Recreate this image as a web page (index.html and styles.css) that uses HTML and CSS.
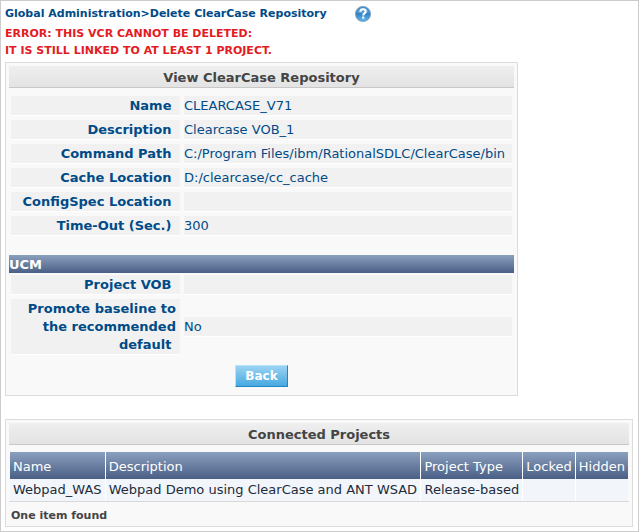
FILE: index.html
```html
<!DOCTYPE html>
<html lang="en">
<head>
<meta charset="utf-8">
<title>Delete ClearCase Repository</title>
<link rel="stylesheet" href="styles.css">
</head>
<body>
<main class="page">
  <header class="crumbs">
    <h1 class="crumbs-title">Global Administration&gt;Delete ClearCase Repository</h1>
    <a class="help" href="#help" aria-label="Help">
      <svg width="18" height="18" viewBox="0 0 18 18" aria-hidden="true">
        <defs>
          <linearGradient id="ball" x1="0" y1="0" x2="0" y2="1">
            <stop offset="0" stop-color="#3f86c4"/>
            <stop offset="0.5" stop-color="#2f82c6"/>
            <stop offset="1" stop-color="#63bdf0"/>
          </linearGradient>
        </defs>
        <circle cx="9" cy="9" r="8.2" fill="#c3d3e0"/>
        <circle cx="9" cy="9" r="7.3" fill="url(#ball)" stroke="#5b90bb" stroke-width="0.8"/>
        <path d="M3 7.5a6.2 6.2 0 0 1 12 0Q9 9.500 3 7.500Z" fill="#8fc0e6" opacity="0.45"/>
        <path d="M6.400 6.700C6.500 4.900 7.600 4.300 9 4.300c1.600 0 2.700.8 2.700 2.200 0 1.900-2.500 1.900-2.500 3.900" fill="none" stroke="#fff" stroke-width="2"/>
        <rect x="8.100" y="11.500" width="2.200" height="2.100" fill="#fff"/>
      </svg>
    </a>
  </header>

  <p class="error" role="alert">ERROR: THIS VCR CANNOT BE DELETED:<br>IT IS STILL LINKED TO AT LEAST 1 PROJECT.</p>

  <section class="panel repository">
    <h2 class="panel-title">View ClearCase Repository</h2>
    <dl class="fields">
      <dt>Name&nbsp;</dt><dd>CLEARCASE_V71</dd>
      <dt>Description&nbsp;</dt><dd>Clearcase VOB_1</dd>
      <dt>Command Path&nbsp;</dt><dd>C:/Program Files/ibm/RationalSDLC/ClearCase/bin</dd>
      <dt>Cache Location&nbsp;</dt><dd>D:/clearcase/cc_cache</dd>
      <dt>ConfigSpec Location&nbsp;</dt><dd></dd>
      <dt>Time-Out (Sec.)&nbsp;</dt><dd>300</dd>
    </dl>
    <h3 class="group-title">UCM</h3>
    <dl class="fields fields-group">
      <dt>Project VOB&nbsp;</dt><dd></dd>
      <dt>Promote baseline to the recommended default&nbsp;</dt><dd>No</dd>
    </dl>
    <div class="actions"><button class="button" type="button">Back</button></div>
  </section>

  <section class="panel projects">
    <h2 class="panel-title">Connected Projects</h2>
    <div class="table-wrap">
      <table class="list">
        <thead>
          <tr><th scope="col">Name</th><th scope="col">Description</th><th scope="col">Project Type</th><th scope="col">Locked</th><th scope="col">Hidden</th></tr>
        </thead>
        <tbody>
          <tr><td>Webpad_WAS</td><td>Webpad Demo using ClearCase and ANT WSAD</td><td>Release-based</td><td></td><td></td></tr>
        </tbody>
      </table>
    </div>
    <p class="summary">One item found</p>
  </section>
</main>
</body>
</html>
```

FILE: styles.css
```css
* {
  box-sizing: border-box;
}

body {
  margin: 0;
  background: #fff;
  color: #004b87;
  font: 13px/18px Verdana, "DejaVu Sans", sans-serif;
}

h1, h2, h3, p, dl, dd {
  margin: 0;
}

.page {
  min-height: 100vh;
  padding: 2px 5px 4px 4px;
  border: 1px solid #ccc;
}

.crumbs {
  display: flex;
  align-items: center;
  gap: 27px;
  height: 22px;
}

.crumbs-title {
  font-size: 11px;
  line-height: 16px;
}

.help {
  display: flex;
}

.error {
  margin-bottom: 3px;
  color: #e31b23;
  font-size: 11px;
  font-weight: bold;
  line-height: 17px;
}

.panel {
  padding: 3px;
  border: 1px solid #dcdcdc;
  background: #f9f9f9;
}

.repository {
  max-width: 513px;
  padding-bottom: 8px;
}

.projects {
  margin-top: 23px;
}

.panel-title {
  height: 22px;
  border-bottom: 1px solid #c8c8c8;
  background: linear-gradient(#efefef, #e3e3e3);
  color: #444;
  font-size: 13px;
  line-height: 24px;
  text-align: center;
}

.fields {
  display: grid;
  grid-template-columns: 169px 1fr;
  align-items: center;
  gap: 4px;
  padding: 8px 2px 0;
}

.fields-group {
  padding-top: 2px;
}

.fields dt,
.fields dd {
  min-height: 20px;
  padding-top: 1px;
  border-bottom: 1px solid #fff;
  background: #f1f1f1;
}

.fields dt {
  padding-right: 4px;
  font-weight: bold;
  text-align: right;
}

.group-title {
  height: 18px;
  margin-top: 19px;
  background: linear-gradient(#8b9fbe, #4a5f86);
  color: #fff;
  font-size: 13px;
  line-height: 20px;
}

.actions {
  display: flex;
  justify-content: center;
  margin-top: 10px;
}

.button {
  height: 22px;
  padding: 0 9px;
  border: 1px solid;
  border-color: #b4e6fb #1f86c8 #1f86c8 #b4e6fb;
  background: linear-gradient(#9bd3f3, #48a8e0);
  color: #fff;
  font: bold 12px/20px Verdana, "DejaVu Sans", sans-serif;
}

.table-wrap {
  margin-top: 7px;
  padding: 0 1px;
  border-bottom: 1px solid #d8d8d8;
}

.list {
  width: 100%;
  border-collapse: separate;
  border-spacing: 0;
}

.list th,
.list td {
  padding: 0 3px;
  border-right: 1px solid #fff;
  text-align: left;
  white-space: nowrap;
}

.list th {
  height: 27px;
  padding-top: 2px;
  background: linear-gradient(#8b9fbe, #4a5f86);
  color: #fff;
  font-weight: normal;
}

.list td {
  height: 22px;
  background: #f2f6fb;
  color: #222b3a;
}

.list th:last-child,
.list td:last-child {
  border-right: 0;
}

.summary {
  padding: 7px 2px 0;
  color: #444;
  font-size: 11px;
  font-weight: bold;
  line-height: 14px;
}
```
